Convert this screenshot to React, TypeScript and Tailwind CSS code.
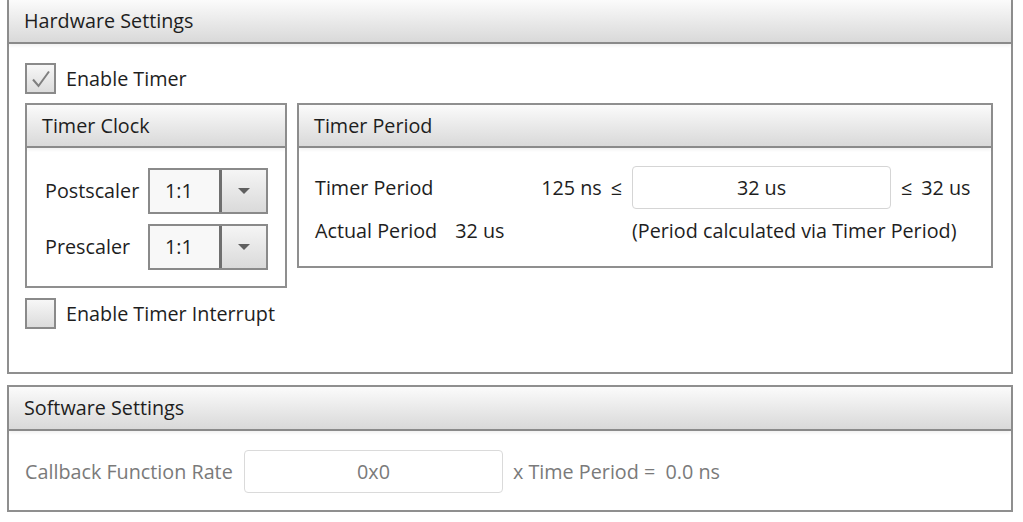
import React from "react";

function CheckBox({ checked }: { checked?: boolean }) {
  return (
    <div className="w-[31px] h-[31px] border-2 border-[#8a8a8a] bg-gradient-to-b from-[#f7f7f7] to-[#dcdcdc] flex items-center justify-center shrink-0">
      {checked && (
        <svg width="22" height="22" viewBox="0 0 22 22">
          <path d="M3 11.5 L8.5 18 L19 3.5" fill="none" stroke="#7f7f7f" strokeWidth="2" />
        </svg>
      )}
    </div>
  );
}

function Dropdown({ value }: { value: string }) {
  return (
    <div className="w-[120px] h-[46px] border-2 border-[#8a8a8a] flex">
      <div className="w-[69px] bg-[#f8f8f8] flex items-center pl-[15px] text-[#1e1e1e]">{value}</div>
      <div className="w-[3px] bg-[#6f6f6f]" />
      <div className="flex-1 bg-gradient-to-b from-[#f5f5f5] to-[#dadada] flex items-center justify-center">
        <svg width="12" height="6" viewBox="0 0 12 6">
          <path d="M0 0 L12 0 L6 6 Z" fill="#5f5f5f" />
        </svg>
      </div>
    </div>
  );
}

function GroupHeader({ title }: { title: string }) {
  return (
    <div className="h-[43px] border-b-2 border-[#8a8a8a] bg-gradient-to-b from-[#fbfbfb] to-[#d9d9d9] flex items-center pl-[15px] shadow-[0_2px_3px_rgba(0,0,0,0.06)]">
      {title}
    </div>
  );
}

export default function App() {
  return (
    <div className="w-[1023px] h-[522px] bg-white overflow-hidden pl-[7px] font-['Open_Sans',sans-serif] text-[19.75px] leading-none text-[#1e1e1e]">
      <div className="w-[1006px] h-[374px] border-2 border-t-0 border-[#8f8f8f] flex flex-col">
        <div className="h-[44px] border-b-2 border-[#8a8a8a] bg-gradient-to-b from-[#fbfbfb] to-[#d9d9d9] flex items-center pl-[15px] shadow-[0_2px_3px_rgba(0,0,0,0.06)]">
          Hardware Settings
        </div>
        <div className="pl-[16px] pt-[19px] flex flex-col">
          <div className="flex items-center gap-[10px] h-[31px]">
            <CheckBox checked />
            <span>Enable Timer</span>
          </div>
          <div className="mt-[9px] flex gap-[10px] items-start">
            <div className="w-[262px] h-[185px] border-2 border-[#8f8f8f] flex flex-col">
              <GroupHeader title="Timer Clock" />
              <div className="pl-[18px] pt-[20px] flex flex-col gap-[10px]">
                <div className="flex items-center">
                  <span className="w-[103px]">Postscaler</span>
                  <Dropdown value="1:1" />
                </div>
                <div className="flex items-center">
                  <span className="w-[103px]">Prescaler</span>
                  <Dropdown value="1:1" />
                </div>
              </div>
            </div>
            <div className="w-[696px] h-[165px] border-2 border-[#8f8f8f] flex flex-col">
              <GroupHeader title="Timer Period" />
              <div className="pl-[16px] pt-[18px] grid grid-cols-[212px_85px_259px_auto] gap-x-[10px] items-center">
                <span>Timer Period</span>
                <span className="flex justify-end items-center gap-[9px] whitespace-nowrap">
                  <span>125 ns</span>
                  <span>≤</span>
                </span>
                <div className="h-[43px] border-[1.5px] border-[#d5d5d5] rounded-[4px] bg-white flex items-center justify-center">
                  32 us
                </div>
                <span className="flex items-center gap-[9px] whitespace-nowrap">
                  <span>≤</span>
                  <span>32 us</span>
                </span>
                <div className="col-span-2 flex gap-[18px] mt-[12px] whitespace-nowrap">
                  <span>Actual Period</span>
                  <span>32 us</span>
                </div>
                <span className="col-span-2 mt-[12px] whitespace-nowrap">(Period calculated via Timer Period)</span>
              </div>
            </div>
          </div>
          <div className="mt-[10px] flex items-center gap-[10px] h-[31px]">
            <CheckBox />
            <span>Enable Timer Interrupt</span>
          </div>
        </div>
      </div>
      <div className="mt-[11px] w-[1006px] h-[127px] border-2 border-[#8f8f8f] flex flex-col">
        <div className="h-[44px] border-b-2 border-[#8a8a8a] bg-gradient-to-b from-[#fbfbfb] to-[#d9d9d9] flex items-center pl-[15px] shadow-[0_2px_3px_rgba(0,0,0,0.06)]">
          Software Settings
        </div>
        <div className="pl-[16px] pt-[19px] flex items-center text-[#7a7a7a]">
          <span className="w-[208px] whitespace-nowrap">Callback Function Rate</span>
          <div className="ml-[11px] w-[259px] h-[43px] border-[1.5px] border-[#dadada] rounded-[4px] bg-white flex items-center justify-center">
            0x0
          </div>
          <span className="ml-[10px] whitespace-nowrap">x Time Period =&nbsp; 0.0 ns</span>
        </div>
      </div>
    </div>
  );
}
